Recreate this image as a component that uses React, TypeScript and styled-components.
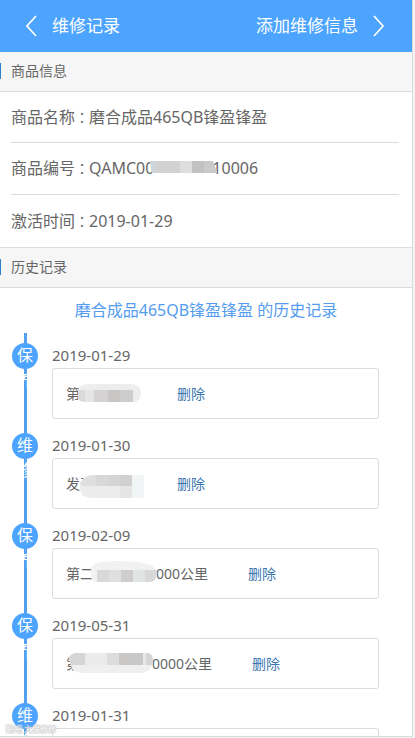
import React from "react";
import styled, { createGlobalStyle } from "styled-components";

const GlobalStyle = createGlobalStyle`
  *, *::before, *::after { box-sizing: border-box; }
  body {
    margin: 0;
    background: #f3f3f3;
    color: #666;
    font-family: "Noto Sans", "Noto Sans CJK SC", sans-serif;
    font-weight: 400;
  }
  h1, h2, h3, p, ol, dl, dd { margin: 0; padding: 0; font-weight: 400; }
`;

const Screen = styled.div`
  display: flex;
  flex-direction: column;
  height: calc(100vh - 1px);
  margin-right: 2px;
  overflow: hidden;
  position: relative;
  background: #fff;
  border-right: 1px solid #dcdcdc;
  border-bottom: 1px solid #dcdcdc;
`;

const TopBar = styled.header`
  display: flex;
  flex: none;
  align-items: center;
  justify-content: space-between;
  height: 52px;
  padding: 0 28px 0 26px;
  background: #4ca4ff;
  color: #fff;
`;

const TopGroup = styled.div`
  display: flex;
  align-items: center;
  gap: 15px;
`;

const TopText = styled.h1`
  font-size: 17px;
  line-height: 24px;
`;

const TopLink = styled.a`
  display: flex;
  align-items: center;
  gap: 15px;
  color: #fff;
  font-size: 17px;
  line-height: 24px;
  text-decoration: none;
`;

const IconButton = styled.button`
  display: flex;
  padding: 0;
  border: 0;
  background: none;
  color: inherit;
`;

const SectionBar = styled.h2<{ $ruled?: boolean }>`
  display: flex;
  flex: none;
  align-items: center;
  height: ${(p) => (p.$ruled ? 41 : 40)}px;
  padding-bottom: 2px;
  border-top: ${(p) => (p.$ruled ? "1px solid #dcdcdc" : "0")};
  border-bottom: 1px solid #dcdcdc;
  background: #f6f6f6;
  font-size: 14px;
  line-height: 20px;

  &::before {
    content: "";
    width: 1px;
    height: 16px;
    margin-right: 10px;
    background: #2f7fcb;
  }
`;

const InfoList = styled.dl`
  flex: none;
  padding: 0 13px 0 11px;
`;

const InfoRow = styled.div`
  display: flex;
  align-items: center;
  height: 52px;
  padding-bottom: 1px;
  font-size: 16px;
  line-height: 24px;
  white-space: nowrap;

  &:first-child { height: 51px; padding-bottom: 0; }
  &:not(:last-child) { border-bottom: 1px solid #dcdcdc; }
`;

const InfoCode = styled.dd`
  display: flex;
  align-items: center;
`;

const Colon = styled.span`
  font-family: "Noto Sans CJK TC", sans-serif;
  font-size: 14px;
`;

const HistoryTitle = styled.h3`
  flex: none;
  padding: 10px 0 11px;
  color: #549cf0;
  font-size: 16px;
  line-height: 24px;
  text-align: center;
`;

const Timeline = styled.ol`
  flex: none;
  list-style: none;
  padding: 0 33px 0 12px;
`;

const Entry = styled.li`
  display: grid;
  grid-template-columns: 26px 1fr;
  column-gap: 14px;
  height: 90px;
  padding-top: 10px;
  background: linear-gradient(#549fee, #549fee) 12px 0 / 3px 100% no-repeat;
`;

const Badge = styled.span`
  width: 26px;
  height: 26px;
  padding: 0 5px;
  border-radius: 50%;
  background: #4ca4ff;
  color: #fff;
  font-size: 16px;
  line-height: 25px;
  text-align: center;
  word-break: break-all;
`;

const EntryBody = styled.div`
  display: flex;
  flex-direction: column;
  gap: 1px;
`;

const EntryDate = styled.time`
  font-size: 15px;
  line-height: 24px;
`;

const Card = styled.div`
  display: flex;
  align-items: center;
  height: 51px;
  padding: 0 13px;
  border: 1px solid #dcdcdc;
  border-radius: 3px;
  font-size: 14px;
  line-height: 20px;
  white-space: nowrap;
`;

const DeleteLink = styled.a`
  margin-left: 40px;
  color: #3a76b0;
  text-decoration: none;
`;

const MaskSvg = styled.svg<{ $before: number; $after: number }>`
  flex: none;
  position: relative;
  overflow: visible;
  margin-left: -${(p) => p.$before}px;
  margin-right: ${(p) => p.$after}px;
`;

const Watermark = styled.span`
  position: absolute;
  left: 6px;
  bottom: 1px;
  color: #fff;
  font-size: 8px;
  line-height: 12px;
  text-shadow: 1px 0 #bbb, -1px 0 #bbb, 0 1px #bbb, 0 -1px #bbb;
  opacity: 0.75;
`;

type Block = [x: number, y: number, w: number, h: number, fill: string];

type MaskProps = {
  id: string;
  width: number;
  height: number;
  shape: string;
  base: string;
  blocks: Block[];
  before: number;
  after?: number;
};

function Mask({ id, width, height, shape, base, blocks, before, after = 0 }: MaskProps) {
  return (
    <MaskSvg width={width} height={height} $before={before} $after={after} aria-hidden="true">
      <clipPath id={id}><path d={shape} /></clipPath>
      <g clipPath={`url(#${id})`}>
        <rect width={width} height={height + 8} fill={base} />
        {blocks.map(([x, y, w, h, fill], i) => (
          <rect key={i} x={x} y={y} width={w} height={h} fill={fill} />
        ))}
      </g>
    </MaskSvg>
  );
}

function Chevron({ flip = false }: { flip?: boolean }) {
  return (
    <svg width="11" height="22" viewBox="0 0 11 22" fill="none" stroke="currentColor" strokeWidth="1.7" aria-hidden="true">
      <path d={flip ? "M1 1 L10 11 L1 21" : "M10 1 L1 11 L10 21"} />
    </svg>
  );
}

type HistoryEntry = {
  date: string;
  label: string;
  lead: string;
  tail: string;
  mask?: MaskProps;
};

const history: HistoryEntry[] = [
  {
    date: "2019-01-29", label: "保养", lead: "第", tail: "",
    mask: {
      id: "m1", width: 63, height: 22, before: 2, after: -4, base: "#ededed",
      shape: "M0 7 Q2 0 14 1 H51 Q63 1 63 10 Q63 19 54 19 H8 Q0 19 0 14Z",
      blocks: [[0, 7, 7, 12, "#d9dadc"], [7, 7, 9, 12, "#e5e5e5"], [16, 7, 14, 12, "#d5d2d3"], [30, 7, 12, 12, "#c8c5c5"], [42, 7, 13, 12, "#cdcdcd"]],
    },
  },
  {
    date: "2019-01-30", label: "维修", lead: "发动", tail: "",
    mask: {
      id: "m2", width: 80, height: 22, before: 14, after: -23, base: "#fff",
      shape: "M0 14 Q1 2 14 2 H64 V25 H10 Q0 24 0 14Z",
      blocks: [[0, 0, 64, 13, "#dfdfdf"], [0, 13, 64, 13, "#ececec"], [16, 2, 12, 11, "#d8d8d8"], [28, 2, 12, 11, "#d5d5d5"], [40, 2, 12, 11, "#d0d0d0"], [40, 13, 12, 12, "#e5e5e5"], [52, 2, 12, 23, "#f2f5f5"]],
    },
  },
  {
    date: "2019-02-09", label: "保养", lead: "第二", tail: "0000公里",
    mask: {
      id: "m3", width: 66, height: 27, before: 3, after: -9, base: "#f1f1f1",
      shape: "M0 10 Q1 2 12 2 Q28 0 46 2 Q64 4 66 12 Q66 22 58 22 H6 Q0 22 0 16Z",
      blocks: [[6, 10, 12, 12, "#d9d9d9"], [18, 10, 12, 12, "#dfdfdf"], [30, 10, 12, 12, "#d0cdcd"], [42, 10, 12, 12, "#e1e4e5"], [54, 10, 12, 12, "#d8d8d8"]],
    },
  },
  {
    date: "2019-05-31", label: "保养", lead: "第", tail: "0000公里",
    mask: {
      id: "m4", width: 84, height: 25, before: 11, after: -1, base: "#efefef",
      shape: "M0 7 Q2 2 8 2 H78 Q84 2 84 10 Q83 21 72 22 H14 Q4 22 2 15Z",
      blocks: [[0, 2, 16, 12, "#d5d5d5"], [16, 2, 22, 12, "#ebebeb"], [38, 2, 12, 12, "#dddddf"], [50, 2, 14, 12, "#cac7c7"], [64, 2, 10, 12, "#c8c8c8"], [74, 2, 3, 12, "#e4e8e8"], [77, 2, 7, 12, "#d5d5d5"]],
    },
  },
  { date: "2019-01-31", label: "维修", lead: "", tail: "" },
];

export default function App() {
  return (
    <>
      <GlobalStyle />
      <Screen>
        <TopBar>
          <TopGroup>
            <IconButton type="button" aria-label="返回"><Chevron /></IconButton>
            <TopText>维修记录</TopText>
          </TopGroup>
          <TopLink href="#add">添加维修信息<Chevron flip /></TopLink>
        </TopBar>

        <SectionBar>商品信息</SectionBar>
        <InfoList>
          <InfoRow><dt>商品名称<Colon>：</Colon></dt><dd>磨合成品465QB锋盈锋盈</dd></InfoRow>
          <InfoRow>
            <dt>商品编号<Colon>：</Colon></dt>
            <InfoCode>
              QAMC00
              <Mask
                id="code" width={67} height={14} before={4} after={-5} base="#d2d2d2"
                shape="M0 0 H63 L67 12 H2Z"
                blocks={[[0, 0, 5, 12, "#d0d5d9"], [30, 0, 12, 12, "#dedede"], [42, 0, 12, 12, "#c2c2c2"], [54, 0, 13, 12, "#cacaca"]]}
              />
              10006
            </InfoCode>
          </InfoRow>
          <InfoRow><dt>激活时间<Colon>：</Colon></dt><dd>2019-01-29</dd></InfoRow>
        </InfoList>

        <SectionBar $ruled>历史记录</SectionBar>
        <HistoryTitle>磨合成品465QB锋盈锋盈 的历史记录</HistoryTitle>
        <Timeline>
          {history.map((entry) => (
            <Entry key={entry.date}>
              <Badge>{entry.label}</Badge>
              <EntryBody>
                <EntryDate>{entry.date}</EntryDate>
                <Card>
                  <span>{entry.lead}</span>
                  {entry.mask && <Mask {...entry.mask} />}
                  <span>{entry.tail}</span>
                  {entry.lead && <DeleteLink href="#delete">删除</DeleteLink>}
                </Card>
              </EntryBody>
            </Entry>
          ))}
        </Timeline>
        <Watermark aria-hidden="true">贴吧 大保修修</Watermark>
      </Screen>
    </>
  );
}
